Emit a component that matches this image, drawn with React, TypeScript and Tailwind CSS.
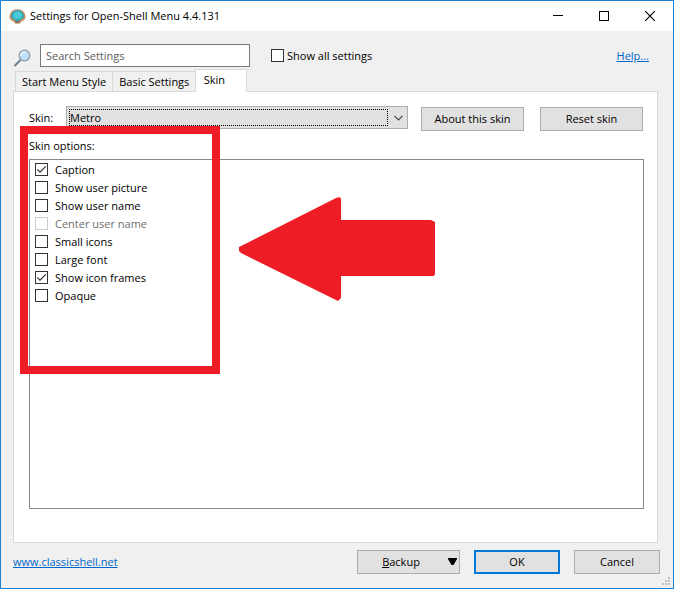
import { useState } from "react";
import type { ReactNode } from "react";

const initialOptions = [
  { id: "caption", label: "Caption", checked: true, disabled: false },
  { id: "user-picture", label: "Show user picture", checked: false, disabled: false },
  { id: "user-name", label: "Show user name", checked: false, disabled: false },
  { id: "center-name", label: "Center user name", checked: false, disabled: true },
  { id: "small-icons", label: "Small icons", checked: false, disabled: false },
  { id: "large-font", label: "Large font", checked: false, disabled: false },
  { id: "icon-frames", label: "Show icon frames", checked: true, disabled: false },
  { id: "opaque", label: "Opaque", checked: false, disabled: false },
];

const tabs = ["Start Menu Style", "Basic Settings", "Skin"];

const ShellLogo = () => (
  <svg width="17" height="15" viewBox="0 0 17 15" aria-hidden="true">
    <path
      d="M8.500 .3C12 .3 15 2 16 5C17 7.500 16.500 10 15 11L12 13L11 14.500H6L5 13L2 11C.5 10 0 7.500 1 5C2 2 5 .3 8.500 .3Z"
      fill="#c98d63"
    />
    <path
      d="M8.500 1.200C12 1.200 14.500 3.500 14.800 7C14.800 8.800 14 9.500 12.500 10L10 12H7L4.500 10C3 9.500 2.200 8.800 2.200 7C2.500 3.500 5 1.200 8.500 1.200Z"
      fill="#22a9bf"
    />
    <ellipse cx="8.500" cy="6.500" rx="4.500" ry="4" fill="#4fd3dc" />
    <path
      d="M8.500 11V2M7.500 11L5 3M9.500 11L12 3M6.500 11L2.800 5.500M10.500 11L14.200 5.500"
      stroke="#2a9db2"
      strokeWidth=".4"
      fill="none"
    />
    <path d="M6.500 12H10.500L10.500 14.200H6.500Z" fill="#8d6f5c" />
  </svg>
);

const Magnifier = () => (
  <svg width="18" height="18" viewBox="0 0 18 18" className="mt-[5px]" aria-hidden="true">
    <path d="M1.500 17L7.500 11" stroke="#74808a" strokeWidth="2.200" />
    <circle cx="11.500" cy="6.500" r="5.300" fill="#bfe0fb" stroke="#8d9ba6" strokeWidth="1.300" />
    <path d="M8 7A3.700 3.700 0 0 1 12 3" stroke="#e4f3ff" strokeWidth="1.500" fill="none" />
  </svg>
);

const CheckBox = ({
  id,
  label,
  checked,
  disabled = false,
  onChange,
  className,
}: {
  id: string;
  label: string;
  checked: boolean;
  disabled?: boolean;
  onChange: () => void;
  className: string;
}) => (
  <div className={`flex h-[18px] items-center ${className}`}>
    <span className="mb-px grid h-[13px] w-[13px] shrink-0">
      <input
        id={id}
        type="checkbox"
        checked={checked}
        disabled={disabled}
        onChange={onChange}
        className="col-start-1 row-start-1 h-[13px] w-[13px] appearance-none border border-[#333333] bg-white disabled:border-[#cccccc]"
      />
      {checked && (
        <svg
          viewBox="0 0 13 13"
          className="pointer-events-none col-start-1 row-start-1 h-[13px] w-[13px]"
          aria-hidden="true"
        >
          <path d="M2.200 6.300L5 9.200L10.800 3.300" fill="none" stroke="#333" strokeWidth="1.200" />
        </svg>
      )}
    </span>
    <label htmlFor={id} className={disabled ? "text-[#6d6d6d]" : "text-black"}>
      {label}
    </label>
  </div>
);

const Button = ({ children, className }: { children: ReactNode; className: string }) => (
  <button
    type="button"
    className={`flex h-6 items-center justify-center bg-[#e1e1e1] ${className}`}
  >
    {children}
  </button>
);

const App = () => {
  const [options, setOptions] = useState(initialOptions);
  const [showAll, setShowAll] = useState(false);
  const [activeTab, setActiveTab] = useState("Skin");
  const [search, setSearch] = useState("");

  const toggleOption = (id: string) => {
    setOptions(options.map((o) => (o.id === id ? { ...o, checked: !o.checked } : o)));
  };

  return (
    <div className="flex min-h-screen flex-col border border-[#1883d7] bg-[#f0f0f0] font-['Open_Sans',sans-serif] text-[11px] leading-4 text-black">
      <header className="flex h-[30px] items-center justify-between bg-white pl-2">
        <div className="flex items-center gap-1">
          <ShellLogo />
          <h1>Settings for Open-Shell Menu 4.4.131</h1>
        </div>
        <div className="flex h-full">
          <button type="button" aria-label="Minimize" className="flex w-[46px] items-center justify-center">
            <svg width="10" height="10" shapeRendering="crispEdges">
              <path d="M0 4.500H10" stroke="#000" />
            </svg>
          </button>
          <button type="button" aria-label="Maximize" className="flex w-[46px] items-center justify-center">
            <svg width="10" height="10" shapeRendering="crispEdges">
              <path d="M.5 .5H9.500V9.500H.5Z" stroke="#000" fill="none" />
            </svg>
          </button>
          <button type="button" aria-label="Close" className="flex w-[46px] items-center justify-center">
            <svg width="10" height="10">
              <path d="M0 0L10 10M10 0L0 10" stroke="#000" strokeWidth="1.200" fill="none" />
            </svg>
          </button>
        </div>
      </header>

      <div className="flex items-start pt-[13px] pr-6 pl-3">
        <Magnifier />
        <input
          type="text"
          aria-label="Search Settings"
          placeholder="Search Settings"
          value={search}
          onChange={(e) => setSearch(e.target.value)}
          className="ml-[9px] h-[23px] w-[210px] border border-[#7a7a7a] bg-white px-[5px] placeholder:text-[#5c5c5c]"
        />
        <div className="flex h-6 flex-1 items-center justify-between pl-[21px]">
          <CheckBox
            id="show-all"
            label="Show all settings"
            checked={showAll}
            onChange={() => setShowAll(!showAll)}
            className="gap-[3px]"
          />
          <a href="#help" className="text-[#0066cc] underline">
            Help...
          </a>
        </div>
      </div>

      <div role="tablist" className="z-10 mt-px -mb-px flex items-end pl-[14px]">
        {tabs.map((tab) => (
          <button
            key={tab}
            type="button"
            role="tab"
            aria-selected={tab === activeTab}
            onClick={() => setActiveTab(tab)}
            className={
              tab === activeTab
                ? "h-[23px] w-[52px] border border-b-0 border-[#d9d9d9] bg-white pr-[14px] pb-[2px]"
                : "h-[21px] border border-r-0 border-[#d9d9d9] px-[6px] whitespace-nowrap"
            }
          >
            {tab}
          </button>
        ))}
      </div>

      <main className="relative mr-[15px] ml-3 flex flex-1 flex-col border border-[#d9d9d9] bg-white pt-[14px] pr-[13px] pb-[33px] pl-[15px]">
        <div className="flex items-start">
          <label htmlFor="skin" className="w-[37px] leading-[23px]">
            Skin:
          </label>
          <div className="grid h-[23px] flex-1">
            <select
              id="skin"
              className="col-start-1 row-start-1 appearance-none border border-[#adadad] bg-[#e1e1e1] pl-[3px]"
            >
              <option>Metro</option>
            </select>
            <span className="pointer-events-none col-start-1 row-start-1 mt-[3px] mr-5 mb-[3px] ml-[3px] border border-dotted border-black" />
            <svg
              width="9"
              height="6"
              className="pointer-events-none col-start-1 row-start-1 mr-[5px] self-center justify-self-end"
              aria-hidden="true"
            >
              <path d="M.5 .8L4.500 4.800L8.500 .8" fill="none" stroke="#444" strokeWidth="1.200" />
            </svg>
          </div>
          <div className="flex gap-4 pt-px pr-px pl-[13px]">
            <Button className="w-[103px] border border-[#adadad]">About this skin</Button>
            <Button className="w-[103px] border border-[#adadad]">Reset skin</Button>
          </div>
        </div>

        <h2 id="options-title" className="mt-[7px] mb-[5px]">
          Skin options:
        </h2>
        <div
          role="group"
          aria-labelledby="options-title"
          className="flex-1 border border-[#828790] pt-px pl-[5px]"
        >
          {options.map((option) => (
            <CheckBox
              key={option.id}
              id={option.id}
              label={option.label}
              checked={option.checked}
              disabled={option.disabled}
              onChange={() => toggleOption(option.id)}
              className="gap-[7px]"
            />
          ))}
        </div>

        {/* callout frame and the arrow pointing at it */}
        <div className="pointer-events-none absolute top-[34px] left-[6px] flex items-center gap-[19px]">
          <div className="h-[248px] w-[200px] border-8 border-[#ee1c25]" />
          <svg width="196" height="106" viewBox="0 0 196 106" aria-hidden="true">
            <path
              d="M0 50L97 1Q102 -1 102 2V23H192L196 25V77L195 79H102V101L99 104L2 56L0 54Z"
              fill="#ee1c25"
            />
          </svg>
        </div>
      </main>

      <footer className="relative flex items-center justify-between pt-[7px] pr-[13px] pb-[14px] pl-3">
        <a href="#classicshell" className="text-[#0066cc] underline">
          www.classicshell.net
        </a>
        <div className="flex gap-[14px]">
          <Button className="w-[103px] border border-[#adadad]">
            <span className="flex-1 pr-1">
              <u>B</u>ackup
            </span>
            <svg width="9" height="8" className="mr-[2px]" aria-hidden="true">
              <path d="M0 0H9V1L5.500 7H3.500L0 1Z" fill="#000" />
            </svg>
          </Button>
          <Button className="w-[86px] border-2 border-[#0078d7]">OK</Button>
          <Button className="w-[86px] border border-[#adadad]">Cancel</Button>
        </div>
        <svg width="8" height="8" className="absolute right-[3px] bottom-[3px]" aria-hidden="true">
          <path
            d="M6 0H8V2H6ZM3 3H5V5H3ZM6 3H8V5H6ZM0 6H2V8H0ZM3 6H5V8H3ZM6 6H8V8H6Z"
            fill="#bfbfbf"
          />
        </svg>
      </footer>
    </div>
  );
};

export default App;
